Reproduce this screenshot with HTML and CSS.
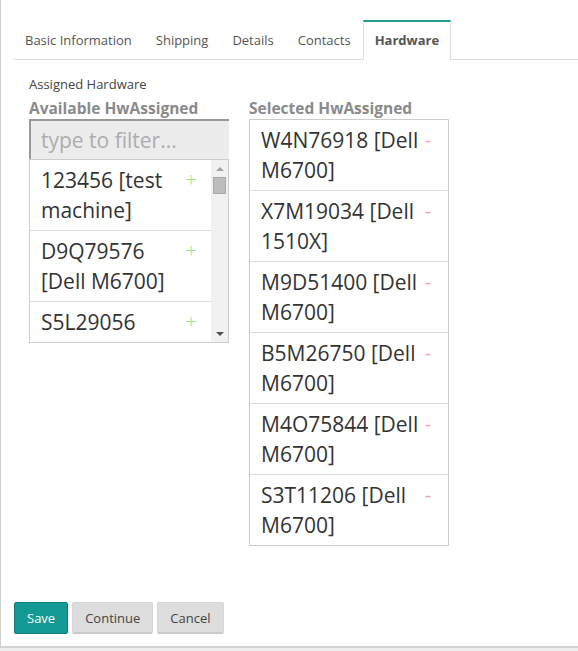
FILE: index.html
```html
<!DOCTYPE html>
<html>
<head>
<meta charset="utf-8">
<link rel="stylesheet" href="styles.css">
</head>
<body>
<div class="page">
  <ul class="tabs">
    <li class="tab">Basic Information</li>
    <li class="tab">Shipping</li>
    <li class="tab">Details</li>
    <li class="tab">Contacts</li>
    <li class="tab active">Hardware</li>
  </ul>
  <div class="panel">
    <div class="field-label">Assigned Hardware</div>
    <div class="columns">
      <div class="col">
        <div class="col-title">Available HwAssigned</div>
        <input class="filter" type="text" placeholder="type to filter...">
        <div class="listbox">
          <ul class="items">
            <li class="item"><span class="item-text">123456 [test machine]</span><span class="act add">+</span></li>
            <li class="item"><span class="item-text">D9Q79576 [Dell M6700]</span><span class="act add">+</span></li>
            <li class="item"><span class="item-text">S5L29056 [Dell M6700]</span><span class="act add">+</span></li>
          </ul>
          <div class="scrollbar">
            <div class="sb-btn"><span class="arrow-up"></span></div>
            <div class="sb-track"><div class="sb-thumb"></div></div>
            <div class="sb-btn"><span class="arrow-down"></span></div>
          </div>
        </div>
      </div>
      <div class="col">
        <div class="col-title">Selected HwAssigned</div>
        <ul class="items selected">
          <li class="item"><span class="item-text">W4N76918 [Dell M6700]</span><span class="act remove">-</span></li>
          <li class="item"><span class="item-text">X7M19034 [Dell 1510X]</span><span class="act remove">-</span></li>
          <li class="item"><span class="item-text">M9D51400 [Dell M6700]</span><span class="act remove">-</span></li>
          <li class="item"><span class="item-text">B5M26750 [Dell M6700]</span><span class="act remove">-</span></li>
          <li class="item"><span class="item-text">M4O75844 [Dell M6700]</span><span class="act remove">-</span></li>
          <li class="item"><span class="item-text">S3T11206 [Dell M6700]</span><span class="act remove">-</span></li>
        </ul>
      </div>
    </div>
  </div>
  <div class="actions">
    <button class="btn btn-primary">Save</button>
    <button class="btn">Continue</button>
    <button class="btn">Cancel</button>
  </div>
</div>
</body>
</html>
```

FILE: styles.css
```css
* { box-sizing: border-box; }
html, body { margin: 0; padding: 0; }
body {
  background: #eeeeee;
  font-family: "Open Sans", "DejaVu Sans", sans-serif;
  color: #333;
}
.page {
  background: #fff;
  border-left: 1px solid #cfcfcf;
  border-bottom: 2px solid #d2d2d2;
  height: 648px;
  padding: 20px 0 0 12px;
}
.tabs {
  list-style: none;
  margin: 0 0 0 1px;
  padding: 0;
  display: flex;
  border-bottom: 1px solid #dddddd;
  height: 40px;
}
.tab {
  font-size: 13px;
  color: #555;
  padding: 0 11px;
  border: 1px solid transparent;
  border-top: 2px solid transparent;
  height: 40px;
  line-height: 37px;
}
.tab:first-child { margin-left: -1px; }
.tab.active {
  font-weight: bold;
  color: #555;
  border-color: #dddddd;
  border-top-color: #1f9e98;
  background: #fff;
  border-bottom-color: #fff;
}
.panel {
  padding: 15px 0 0 16px;
}
.field-label {
  font-size: 13px;
  color: #444;
  line-height: 18px;
}
.columns {
  display: flex;
  gap: 20px;
  margin-top: 5px;
}
.col {
  width: 200px;
}
.col-title {
  font-size: 15.5px;
  font-weight: bold;
  color: #8a8a8a;
  line-height: 20px;
  margin-bottom: 1px;
  white-space: nowrap;
}
.filter {
  display: block;
  width: 200px;
  height: 40px;
  margin: 0;
  border-style: solid;
  border-width: 2px 0 0 2px;
  border-color: #999;
  background: #ececec;
  font-family: "Open Sans", sans-serif;
  font-size: 21px;
  padding: 0 0 0 10px;
  color: #333;
  outline: none;
}
.filter::placeholder { color: #adadad; }
.listbox {
  display: flex;
  width: 200px;
  height: 184px;
  border: 1px solid #cccccc;
  overflow: hidden;
}
.items {
  list-style: none;
  margin: 0;
  padding: 0;
}
.listbox .items {
  flex: 1;
  overflow: hidden;
}
.selected {
  border: 1px solid #cccccc;
  width: 200px;
}
.item {
  display: flex;
  align-items: flex-start;
  padding: 5px 12px 5px 11px;
  border-bottom: 1px solid #dddddd;
  font-size: 21px;
  line-height: 30px;
  color: #333;
}
.selected .item:last-child { border-bottom: 0; }
.item-text { flex: 1; }
.act {
  width: 16px;
  text-align: center;
  font-size: 20px;
  line-height: 30px;
}
.add { color: #8fe88f; font-weight: 300; }
.remove { color: #f4a3a8; }
.scrollbar {
  width: 17px;
  background: #f1f1f1;
  display: flex;
  flex-direction: column;
}
.sb-btn {
  height: 17px;
  display: flex;
  align-items: center;
  justify-content: center;
}
.arrow-up {
  width: 0; height: 0;
  border-left: 4px solid transparent;
  border-right: 4px solid transparent;
  border-bottom: 4px solid #a3a3a3;
}
.arrow-down {
  width: 0; height: 0;
  border-left: 4px solid transparent;
  border-right: 4px solid transparent;
  border-top: 4px solid #505050;
}
.sb-track {
  flex: 1;
  padding: 0 2px;
}
.sb-thumb {
  height: 17px;
  background: #bdbdbd;
  border: 1px solid #a9a9a9;
}
.actions {
  display: flex;
  gap: 4px;
  margin-top: 56px;
  margin-left: 1px;
}
.btn {
  font-family: "Open Sans", sans-serif;
  font-size: 13px;
  height: 32px;
  padding: 0 12px;
  border: 1px solid #d6d6d6;
  border-bottom: 2px solid #cacaca;
  background: #dddddd;
  color: #444;
  border-radius: 2px;
}
.btn-primary {
  background: #139a94;
  color: #fff;
  border: 1px solid #0f7e79;
  padding: 0 12px;
}
```
